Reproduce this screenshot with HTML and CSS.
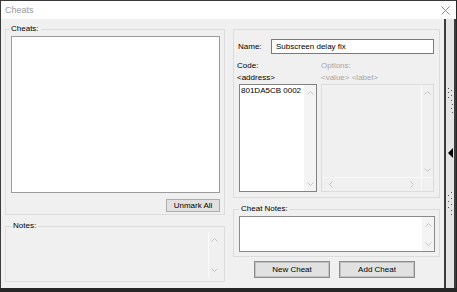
FILE: index.html
```html
<!DOCTYPE html>
<html lang="en">
<head>
    <meta charset="UTF-8">
    <title>Cheats</title>
    <link rel="stylesheet" href="styles.css">
</head>
<body>
    <div class="window">
        <div class="titlebar">
            <span class="title">Cheats</span>
            <svg class="close" width="9" height="9" viewBox="0 0 9 9">
                <path d="M0.5 0.5 L8.5 8.5 M8.5 0.5 L0.5 8.5" stroke="#8a8a8a" stroke-width="1" fill="none"/>
            </svg>
        </div>
        <div class="client">
            <div class="main">
                <div class="col-left">
                    <fieldset class="group cheats-group">
                        <legend>Cheats:</legend>
                        <div class="listbox"></div>
                        <div class="row-end">
                            <button class="btn btn-small">Unmark All</button>
                        </div>
                    </fieldset>
                    <fieldset class="group notes-group">
                        <legend>Notes:</legend>
                        <div class="notes-box">
                            <div class="vscroll light">
                                <svg width="7" height="4" viewBox="0 0 7 4"><polyline points="0.5,3.5 3.5,0.5 6.5,3.5" fill="none" stroke="#c4c4c4"/></svg>
                                <svg width="7" height="4" viewBox="0 0 7 4"><polyline points="0.5,0.5 3.5,3.5 6.5,0.5" fill="none" stroke="#c4c4c4"/></svg>
                            </div>
                        </div>
                    </fieldset>
                </div>
                <div class="col-right">
                    <fieldset class="group props-group">
                        <div class="name-row">
                            <label class="name-label">Name:</label>
                            <div class="input">Subscreen delay fix</div>
                        </div>
                        <div class="code-row">
                            <div class="code-col">
                                <div class="lbl">Code:</div>
                                <div class="lbl">&lt;address&gt;</div>
                                <div class="codebox">
                                    <div class="code-text">801DA5CB 0002</div>
                                    <div class="vscroll code-scroll">
                                        <svg width="7" height="4" viewBox="0 0 7 4"><polyline points="0.5,3.5 3.5,0.5 6.5,3.5" fill="none" stroke="#c4c4c4"/></svg>
                                        <svg width="7" height="4" viewBox="0 0 7 4"><polyline points="0.5,0.5 3.5,3.5 6.5,0.5" fill="none" stroke="#c4c4c4"/></svg>
                                    </div>
                                </div>
                            </div>
                            <div class="opt-col">
                                <div class="lbl disabled">Options:</div>
                                <div class="lbl disabled">&lt;value&gt; &lt;label&gt;</div>
                                <div class="optbox">
                                    <div class="opt-area"></div>
                                    <div class="vscroll opt-vscroll">
                                        <svg width="7" height="4" viewBox="0 0 7 4"><polyline points="0.5,3.5 3.5,0.5 6.5,3.5" fill="none" stroke="#c4c4c4"/></svg>
                                        <svg width="7" height="4" viewBox="0 0 7 4"><polyline points="0.5,0.5 3.5,3.5 6.5,0.5" fill="none" stroke="#c4c4c4"/></svg>
                                    </div>
                                    <div class="hscroll">
                                        <svg width="4" height="7" viewBox="0 0 4 7"><polyline points="3.5,0.5 0.5,3.5 3.5,6.5" fill="none" stroke="#c4c4c4"/></svg>
                                        <svg width="4" height="7" viewBox="0 0 4 7"><polyline points="0.5,0.5 3.5,3.5 0.5,6.5" fill="none" stroke="#c4c4c4"/></svg>
                                    </div>
                                    <div class="corner"></div>
                                </div>
                            </div>
                        </div>
                    </fieldset>
                    <fieldset class="group cheatnotes-group">
                        <legend>Cheat Notes:</legend>
                        <div class="textarea">
                            <div class="vscroll notes-scroll">
                                <svg width="7" height="4" viewBox="0 0 7 4"><polyline points="0.5,3.5 3.5,0.5 6.5,3.5" fill="none" stroke="#c4c4c4"/></svg>
                                <svg width="7" height="4" viewBox="0 0 7 4"><polyline points="0.5,0.5 3.5,3.5 6.5,0.5" fill="none" stroke="#c4c4c4"/></svg>
                            </div>
                        </div>
                    </fieldset>
                    <div class="button-row">
                        <button class="btn btn-big">New Cheat</button>
                        <button class="btn btn-big">Add Cheat</button>
                    </div>
                </div>
            </div>
            <div class="splitter">
                <svg class="dots" width="6" height="26" viewBox="0 0 6 26">
                    <rect x="1" y="0" width="1" height="1" fill="#555"/>
                    <rect x="4" y="2" width="1" height="1" fill="#555"/>
                    <rect x="1" y="4" width="1" height="1" fill="#555"/>
                    <rect x="4" y="7" width="1" height="1" fill="#555"/>
                    <rect x="1" y="9" width="1" height="1" fill="#555"/>
                    <rect x="4" y="12" width="1" height="1" fill="#555"/>
                    <rect x="5" y="16" width="1" height="1" fill="#555"/>
                    <rect x="4" y="20" width="1" height="1" fill="#555"/>
                    <rect x="5" y="24" width="1" height="1" fill="#555"/>
                </svg>
                <svg class="arrow" width="5" height="10" viewBox="0 0 5 10">
                    <polygon points="5,0 0,5 5,10" fill="#000"/>
                </svg>
                <svg class="dots dots-low" width="6" height="26" viewBox="0 0 6 26">
                    <rect x="4" y="0" width="1" height="1" fill="#555"/>
                    <rect x="1" y="3" width="1" height="1" fill="#555"/>
                    <rect x="4" y="6" width="1" height="1" fill="#555"/>
                    <rect x="1" y="9" width="1" height="1" fill="#555"/>
                    <rect x="4" y="12" width="1" height="1" fill="#555"/>
                    <rect x="1" y="15" width="1" height="1" fill="#555"/>
                    <rect x="4" y="18" width="1" height="1" fill="#555"/>
                    <rect x="4" y="22" width="1" height="1" fill="#555"/>
                </svg>
            </div>
        </div>
    </div>
</body>
</html>
```

FILE: styles.css
```css
body {
    margin: 0;
    background: #262626;
    font-family: "Liberation Sans", Arial, sans-serif;
    font-size: 8px;
    color: #000;
}
.window {
    width: 456px;
    height: 288px;
    box-sizing: border-box;
    border-top: 1px solid #3a3a3a;
    border-left: 1px solid #3a3a3a;
    display: flex;
    flex-direction: column;
}
.titlebar {
    height: 18px;
    background: #fff;
    display: flex;
    align-items: center;
    padding-left: 4px;
    flex-shrink: 0;
}
.title {
    color: #9a9a9a;
    font-size: 9px;
}
.close {
    margin-left: auto;
    margin-right: 6px;
}
.client {
    flex: 1;
    display: flex;
}
.main {
    width: 443px;
    background: #f0f0f0;
    padding: 5px 0 0 4px;
    box-sizing: border-box;
    display: flex;
    gap: 8px;
}
.col-left {
    width: 220px;
    display: flex;
    flex-direction: column;
    gap: 6px;
}
.col-right {
    width: 207px;
    display: flex;
    flex-direction: column;
}
.group {
    margin: 0;
    min-width: 0;
    border: 1px solid #dcdcdc;
    padding: 2px 4px 2px 5px;
}
.group legend {
    padding: 0 2px;
    line-height: 10px;
    font-size: 8px;
}
.cheats-group legend {
    margin-left: -2px;
}
.listbox {
    height: 157px;
    box-sizing: border-box;
    border: 1px solid #9c9c9c;
    background: #fff;
}
.row-end {
    display: flex;
    justify-content: flex-end;
    margin-top: 6px;
}
.btn {
    font-family: inherit;
    font-size: 8px;
    color: #000;
    padding: 0;
    background: #e1e1e1;
    box-sizing: border-box;
}
.btn-small {
    width: 54px;
    height: 13px;
    line-height: 11px;
    border: 1px solid #adadad;
}
.notes-group {
    padding-top: 1px;
    padding-bottom: 4px;
}
.notes-box {
    height: 45px;
    display: flex;
    justify-content: flex-end;
}
.vscroll {
    width: 12px;
    display: flex;
    flex-direction: column;
    justify-content: space-between;
    align-items: center;
    box-sizing: border-box;
}
.vscroll.light {
    border-left: 1px solid #fbfbfb;
    padding: 6px 0 5px;
}
.props-group {
    margin-top: 5px;
    padding: 9px 5px 5px 4px;
}
.name-row {
    display: flex;
    align-items: center;
    height: 15px;
}
.name-label {
    width: 33px;
}
.input {
    width: 163px;
    height: 15px;
    box-sizing: border-box;
    border: 1px solid #7a7a7a;
    background: #fff;
    padding-left: 4px;
    line-height: 13px;
}
.code-row {
    display: flex;
    gap: 4px;
    margin-top: 6px;
}
.lbl {
    line-height: 12px;
    height: 12px;
}
.lbl.disabled {
    color: #a6a6a6;
}
.code-col {
    width: 79px;
}
.code-col .lbl {
    margin-left: -1px;
}
.codebox {
    margin-left: 1px;
    width: 78px;
    height: 108px;
    box-sizing: border-box;
    border: 1px solid #828282;
    background: #fff;
    display: flex;
}
.code-text {
    flex: 1;
    overflow: hidden;
    white-space: nowrap;
    padding-left: 1px;
    line-height: 12px;
}
.code-scroll {
    background: #f4f4f4;
    padding: 6px 0 5px;
}
.opt-col {
    width: 113px;
}
.optbox {
    height: 108px;
    box-sizing: border-box;
    border: 1px solid #dcdcdc;
    display: grid;
    grid-template-columns: 1fr 12px;
    grid-template-rows: 1fr 14px;
}
.opt-vscroll {
    width: auto;
    border-left: 1px solid #fafafa;
    padding: 6px 0 5px;
}
.hscroll {
    border-top: 1px solid #fafafa;
    display: flex;
    justify-content: space-between;
    align-items: center;
    padding: 0 7px;
}
.corner {
    border-top: 1px solid #fafafa;
    border-left: 1px solid #fafafa;
}
.cheatnotes-group {
    margin-top: 6px;
    padding-bottom: 4px;
}
.textarea {
    height: 36px;
    box-sizing: border-box;
    border: 1px solid #8a8a8a;
    background: #fff;
    display: flex;
    justify-content: flex-end;
}
.notes-scroll {
    background: #f4f4f4;
    padding: 6px 0 5px;
}
.button-row {
    display: flex;
    gap: 9px;
    margin-top: 4px;
    padding-left: 21px;
}
.btn-big {
    width: 76px;
    height: 17px;
    border: 1px solid #8c8c8c;
    box-shadow: inset 0 0 0 1px #c2c2c2;
    line-height: 15px;
}
.splitter {
    width: 12px;
    box-sizing: border-box;
    border-left: 2px solid #3c3c3c;
    border-right: 2px solid #3c3c3c;
    background: #e4e4e4;
    display: flex;
    flex-direction: column;
    align-items: center;
    padding-top: 69px;
}
.arrow {
    margin-top: 34px;
}
.dots-low {
    margin-top: 34px;
}
```
